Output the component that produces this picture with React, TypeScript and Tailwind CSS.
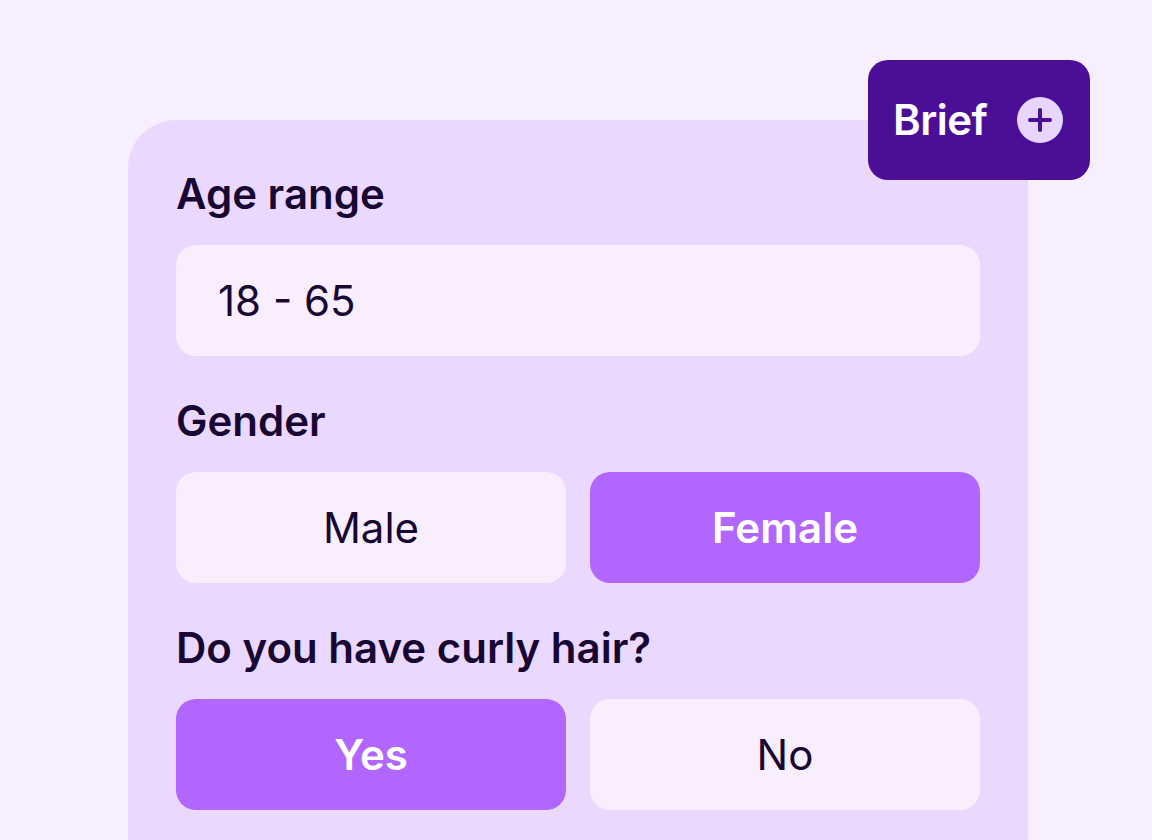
import React from "react";

export default function App() {
  const font = { fontFamily: "Inter, 'Noto Sans', sans-serif" };
  return (
    <div
      className="min-h-screen w-full bg-[#f8effe] pl-[128px] pt-[120px] overflow-hidden h-[840px]"
      style={font}
    >
      <div className="relative w-[900px] h-[760px] rounded-t-[48px] bg-[#ebd8fe] px-[48px] pt-[50px] flex flex-col gap-[41px]">
        <div className="absolute -top-[60px] -right-[62px] w-[222px] h-[120px] rounded-[20px] bg-[#4b0e96] flex items-center pl-[25px]">
          <span className="text-white text-[42px] font-semibold leading-none tracking-[-0.5px]">Brief</span>
          <span className="ml-[30px] w-[46px] h-[46px] rounded-full bg-[#e8d5fd] flex items-center justify-center">
            <svg width="24" height="24" viewBox="0 0 24 24">
              <path d="M12 2v20M2 12h20" stroke="#4b0e96" strokeWidth="4" strokeLinecap="round" />
            </svg>
          </span>
        </div>

        <div className="flex flex-col">
          <div className="text-[42px] leading-[48px] font-semibold text-[#180733] mb-[27px]">Age range</div>
          <div className="h-[111px] rounded-[20px] bg-[#f8eefe] flex items-center pl-[42px] text-[42px] text-[#180733]">
            18 - 65
          </div>
        </div>

        <div className="flex flex-col">
          <div className="text-[42px] leading-[48px] font-semibold text-[#180733] mb-[27px]">Gender</div>
          <div className="grid grid-cols-2 gap-[24px]">
            <div className="h-[111px] rounded-[20px] bg-[#f8eefe] flex items-center justify-center text-[42px] text-[#180733]">Male</div>
            <div className="h-[111px] rounded-[20px] bg-[#b166fe] flex items-center justify-center text-[42px] font-semibold text-white">Female</div>
          </div>
        </div>

        <div className="flex flex-col">
          <div className="text-[42px] leading-[48px] font-semibold text-[#180733] mb-[27px]">Do you have curly hair?</div>
          <div className="grid grid-cols-2 gap-[24px]">
            <div className="h-[111px] rounded-[20px] bg-[#b166fe] flex items-center justify-center text-[42px] font-semibold text-white">Yes</div>
            <div className="h-[111px] rounded-[20px] bg-[#f8eefe] flex items-center justify-center text-[42px] text-[#180733]">No</div>
          </div>
        </div>
      </div>
    </div>
  );
}
